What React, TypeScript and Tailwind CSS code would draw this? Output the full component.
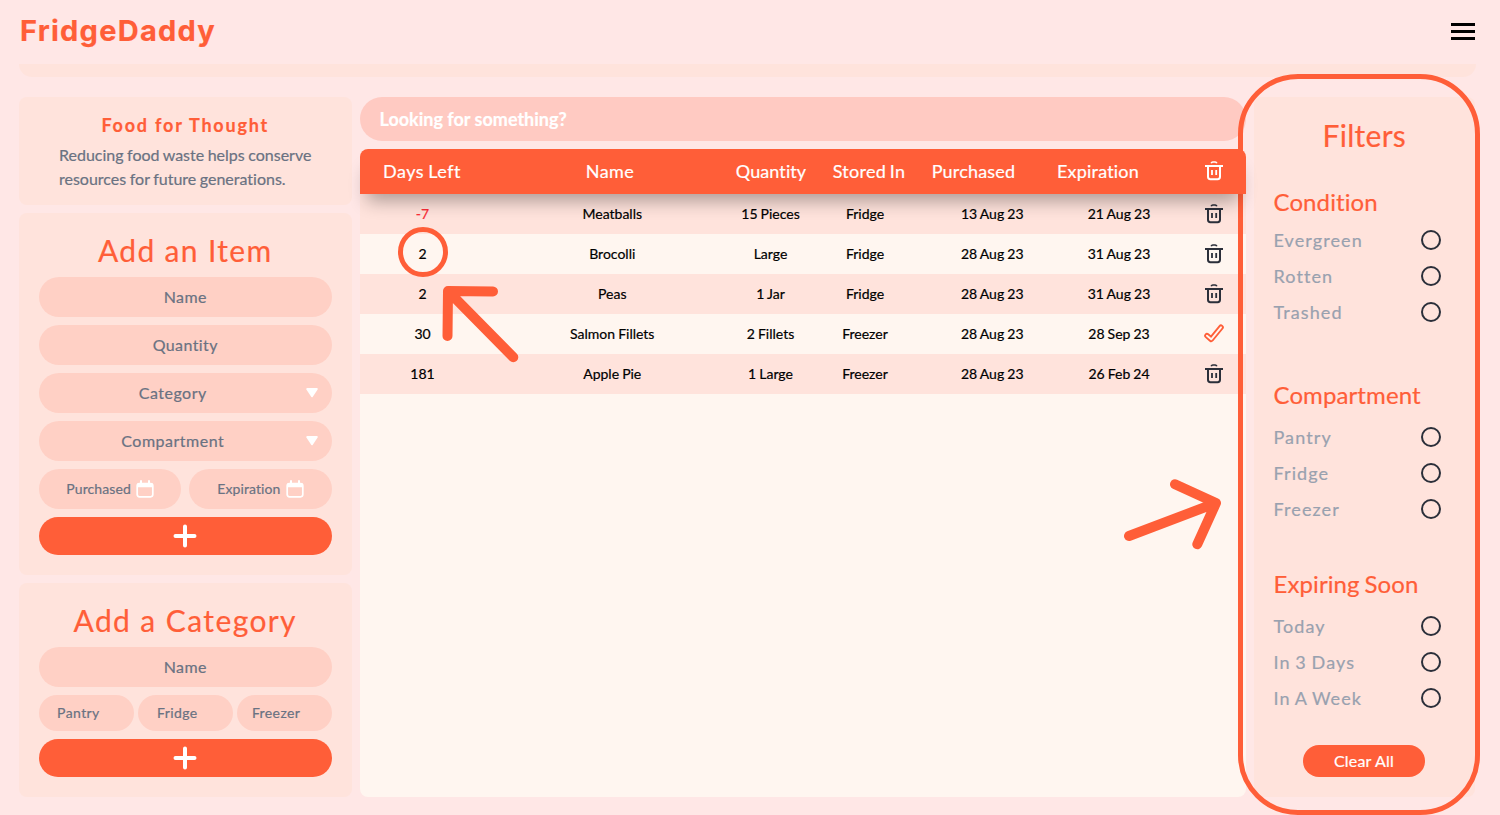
import React from "react";

const HEADINGS = [
  { label: "Days Left", width: "w-[124px] tracking-[0.5px] [word-spacing:-1px]" },
  { label: "Name", width: "w-[252px] tracking-[0.4px]" },
  { label: "Quantity", width: "w-[70px] tracking-[0.1px]" },
  { label: "Stored In", width: "w-[126px] tracking-[0.25px] [word-spacing:-1px]" },
  { label: "Purchased", width: "w-[83px] tracking-[0.2px]" },
  { label: "Expiration", width: "w-[166px] tracking-[0.2px]" },
];

const ROWS = [
  { days: "-7", name: "Meatballs", quantity: "15 Pieces", stored: "Fridge", purchased: "13 Aug 23", expiration: "21 Aug 23" },
  { days: "2", name: "Brocolli", quantity: "Large", stored: "Fridge", purchased: "28 Aug 23", expiration: "31 Aug 23" },
  { days: "2", name: "Peas", quantity: "1 Jar", stored: "Fridge", purchased: "28 Aug 23", expiration: "31 Aug 23" },
  { days: "30", name: "Salmon Fillets", quantity: "2 Fillets", stored: "Freezer", purchased: "28 Aug 23", expiration: "28 Sep 23", marked: true },
  { days: "181", name: "Apple Pie", quantity: "1 Large", stored: "Freezer", purchased: "28 Aug 23", expiration: "26 Feb 24" },
];

const FILTERS = [
  { title: "Condition", height: "h-[193px]", gap: "mt-[4px]", items: ["Evergreen", "Rotten", "Trashed"] },
  { title: "Compartment", height: "h-[189px]", gap: "mt-[8px]", items: ["Pantry", "Fridge", "Freezer"] },
  { title: "Expiring Soon", height: "h-[177px]", gap: "mt-[8px]", items: ["Today", "In 3 Days", "In A Week"] },
];

function TrashIcon() {
  return (
    <svg width="20" height="20" viewBox="0 0 20 20" fill="none" stroke="currentColor" strokeWidth="2">
      <path d="M7.2 2.2c.3-.8.9-1.2 1.6-1.2h2.4c.7 0 1.3.4 1.6 1.2" strokeWidth="1.7" />
      <path d="M1 5h18" />
      <path d="M4 5.500V15.800a2.400 2.400 0 0 0 2.400 2.400h7.200a2.400 2.400 0 0 0 2.400-2.400V5.500" />
      <path d="M8 9v5M12.200 9v5" strokeWidth="1.800" />
    </svg>
  );
}

function MarkIcon() {
  return (
    <svg width="20" height="20" viewBox="0 0 20 20" fill="none" strokeLinecap="round" strokeLinejoin="round">
      <path d="M3 11.700l4.200 3.600 9.800-12" stroke="#ff5e38" strokeWidth="5.600" />
      <path d="M3 11.700l4.200 3.600 9.800-12" stroke="#fff6f0" strokeWidth="1.900" />
    </svg>
  );
}

function CalendarIcon() {
  return (
    <svg width="18" height="18" viewBox="0 0 18 18" className="text-white">
      <path d="M5 1v3M13 1v3" stroke="currentColor" strokeWidth="2" strokeLinecap="round" />
      <rect x="1.200" y="3.500" width="15.600" height="13.300" rx="2.200" fill="none" stroke="currentColor" strokeWidth="1.700" />
      <path d="M1 7.200V5a2 2 0 0 1 2-2h12a2 2 0 0 1 2 2v2.200z" fill="currentColor" />
    </svg>
  );
}

function Field({ label }: { label: string }) {
  return (
    <div className="flex h-10 items-center justify-center rounded-full bg-[#ffd0c5] tracking-wide text-gray-500">
      {label}
    </div>
  );
}

function SelectField({ label }: { label: string }) {
  return (
    <div className="flex h-10 items-center rounded-full bg-[#ffd0c5] pr-[13px] text-gray-500">
      <span className="flex-1 pl-[2px] text-center tracking-[0.5px]">{label}</span>
      <svg width="14" height="12" viewBox="0 0 14 12" className="mb-px">
        <path d="M2.200 2h9.600L7 9.200z" fill="#fff" stroke="#fff" strokeWidth="2" strokeLinejoin="round" />
      </svg>
    </div>
  );
}

function AddButton() {
  return (
    <button className="flex h-[38px] w-full items-center justify-center rounded-full bg-[#ff5e38]">
      <svg width="24" height="24" viewBox="0 0 24 24" stroke="#fff" strokeWidth="4" strokeLinecap="round">
        <path d="M12 2.500v19M2.500 12h19" />
      </svg>
    </button>
  );
}

function Sidebar() {
  return (
    <aside className="flex w-[332.5px] shrink-0 flex-col gap-2">
      <section className="h-[108px] rounded-lg bg-[#ffe3dc] px-[38px] pt-[14px]">
        <h2 className="text-center text-lg font-bold leading-7 tracking-[1.800px] text-[#ff5e38]">Food for Thought</h2>
        <p className="mt-1 pl-[2px] text-base text-gray-500 [word-spacing:-0.6px]">Reducing food waste helps conserve resources for future generations.</p>
      </section>
      <section className="flex flex-col gap-2 rounded-lg bg-[#ffe3dc] p-5">
        <h2 className="-mt-px mb-px text-center text-3xl tracking-[1.35px] text-[#ff5e38]">Add an Item</h2>
        <Field label="Name" />
        <Field label="Quantity" />
        <SelectField label="Category" />
        <SelectField label="Compartment" />
        <div className="grid grid-cols-2 gap-2 text-sm text-gray-500">
          {["Purchased", "Expiration"].map((label) => (
            <div key={label} className="flex h-10 items-center justify-center gap-[5px] rounded-full bg-[#ffd0c5]">
              <span className="tracking-[0.1px]">{label}</span>
              <CalendarIcon />
            </div>
          ))}
        </div>
        <AddButton />
      </section>
      <section className="flex flex-col gap-2 rounded-lg bg-[#ffe3dc] p-5">
        <h2 className="-mt-px mb-px text-center text-3xl tracking-[1.4px] text-[#ff5e38]">Add a Category</h2>
        <Field label="Name" />
        <div className="grid grid-cols-3 gap-1 text-sm tracking-[0.4px] text-gray-500">
          {["Pantry", "Fridge", "Freezer"].map((label) => (
            <div key={label} className="flex h-9 items-center justify-center rounded-full bg-[#ffd0c5] pr-4">
              {label}
            </div>
          ))}
        </div>
        <AddButton />
      </section>
    </aside>
  );
}

function Inventory() {
  return (
    <main className="flex w-[886px] shrink-0 flex-col gap-2">
      <div className="flex h-11 items-center rounded-full bg-[#ffcac2] px-5 text-lg font-bold text-white">Looking for something?</div>
      <div className="flex-1 rounded-lg bg-[#fff6f0]">
        <div className="relative z-20 flex h-[45px] items-center rounded-t-lg bg-[#ff5e38] pb-px pl-[0.5px] text-lg text-white shadow-[0_14px_18px_-7px_rgba(0,0,0,0.32)]">
          {HEADINGS.map((h) => (
            <div key={h.label} className={`flex shrink-0 justify-center whitespace-nowrap ${h.width}`}>{h.label}</div>
          ))}
          <div className="flex w-[65px] shrink-0 justify-center"><TrashIcon /></div>
        </div>
        {ROWS.map((r) => (
          <div key={r.name} className="flex h-10 items-center whitespace-nowrap pl-[0.5px] text-center text-sm text-black [word-spacing:-0.5px] odd:bg-[#fff6f0] even:bg-[#ffe3dc]">
            <div className={r.days.startsWith("-") ? "w-[125px] text-red-500" : "w-[125px]"}>{r.days}</div>
            <div className="w-[254.5px]">{r.name}</div>
            <div className="w-[62px]">{r.quantity}</div>
            <div className="w-[127px]">{r.stored}</div>
            <div className="w-[127.5px]">{r.purchased}</div>
            <div className="w-[126px]">{r.expiration}</div>
            <div className="flex w-[63px] justify-center text-[#2b2f3a]">{r.marked ? <MarkIcon /> : <TrashIcon />}</div>
          </div>
        ))}
      </div>
    </main>
  );
}

function Filters() {
  return (
    <aside className="flex flex-1 flex-col rounded-lg bg-[#ffe3dc] pl-5 pr-[34px] pt-5">
      <h2 className="mb-[33px] pl-[14px] text-center text-3xl tracking-[0.3px] text-[#ff5e38]">Filters</h2>
      {FILTERS.map((group) => (
        <section key={group.title} className={group.height}>
          <h3 className="text-2xl tracking-[0.1px] text-[#ff5e38] [word-spacing:-1.500px]">{group.title}</h3>
          <ul className={group.gap}>
            {group.items.map((item) => (
              <li key={item} className="flex h-9 items-center justify-between text-lg tracking-[1.100px] text-gray-400 [word-spacing:-1px]">
                <span>{item}</span>
                <span className="size-5 rounded-full border-2 border-[#2b2f3a]" />
              </li>
            ))}
          </ul>
        </section>
      ))}
      <button className="ml-[29.5px] flex h-8 w-[122px] shrink-0 items-center justify-center rounded-full bg-[#ff5e38] text-base tracking-[0.2px] text-white">Clear All</button>
    </aside>
  );
}

export default function App() {
  return (
    <div className="relative flex h-[815px] w-[1500px] flex-col overflow-hidden bg-[#ffe7e6] font-['Lato',sans-serif] [-webkit-text-stroke:0.2px] [font-variant-ligatures:none]">
      <header className="flex h-16 items-center justify-between pb-[1px] pl-5 pr-[25px]">
        <h1 className="mb-px font-['Inter',sans-serif] text-[29px] font-bold tracking-[1.250px] text-[#ff5e38]">FridgeDaddy</h1>
        <div className="flex w-6 flex-col gap-1">
          <span className="h-[3px] bg-black" />
          <span className="h-[3px] bg-black" />
          <span className="h-[3px] bg-black" />
        </div>
      </header>
      <div className="mb-5 ml-[19px] mr-[24px] h-[13px] shrink-0 rounded-b-2xl bg-[#ffe3dc]" />
      <div className="ml-[19px] mr-[25px] flex h-[700px] gap-2">
        <Sidebar />
        <Inventory />
        <Filters />
      </div>

      <div className="pointer-events-none absolute left-[1238px] top-[74px] z-10 h-[741px] w-[242px] rounded-[60px] border-[5px] border-[#ff5e38]" />
      <div className="pointer-events-none absolute left-[398px] top-[227px] z-30 size-[50px] rounded-full border-[5px] border-[#ff5e38]" />
      <svg className="pointer-events-none absolute left-[440px] top-[284px] z-30" width="82" height="82" viewBox="440 284 82 82" fill="none" stroke="#ff5e38" strokeWidth="10" strokeLinecap="round" strokeLinejoin="round">
        <path d="M447.500 336L448 291l45 .500M448 291l65.300 66.300" />
      </svg>
      <svg className="pointer-events-none absolute left-[1120px] top-[474px] z-30" width="106" height="80" viewBox="1120 474 106 80" fill="none" stroke="#ff5e38" strokeWidth="10" strokeLinecap="round" strokeLinejoin="round">
        <path d="M1175 484.300L1216 503l-18.700 41.300M1216 503l-87 33" />
      </svg>
    </div>
  );
}
